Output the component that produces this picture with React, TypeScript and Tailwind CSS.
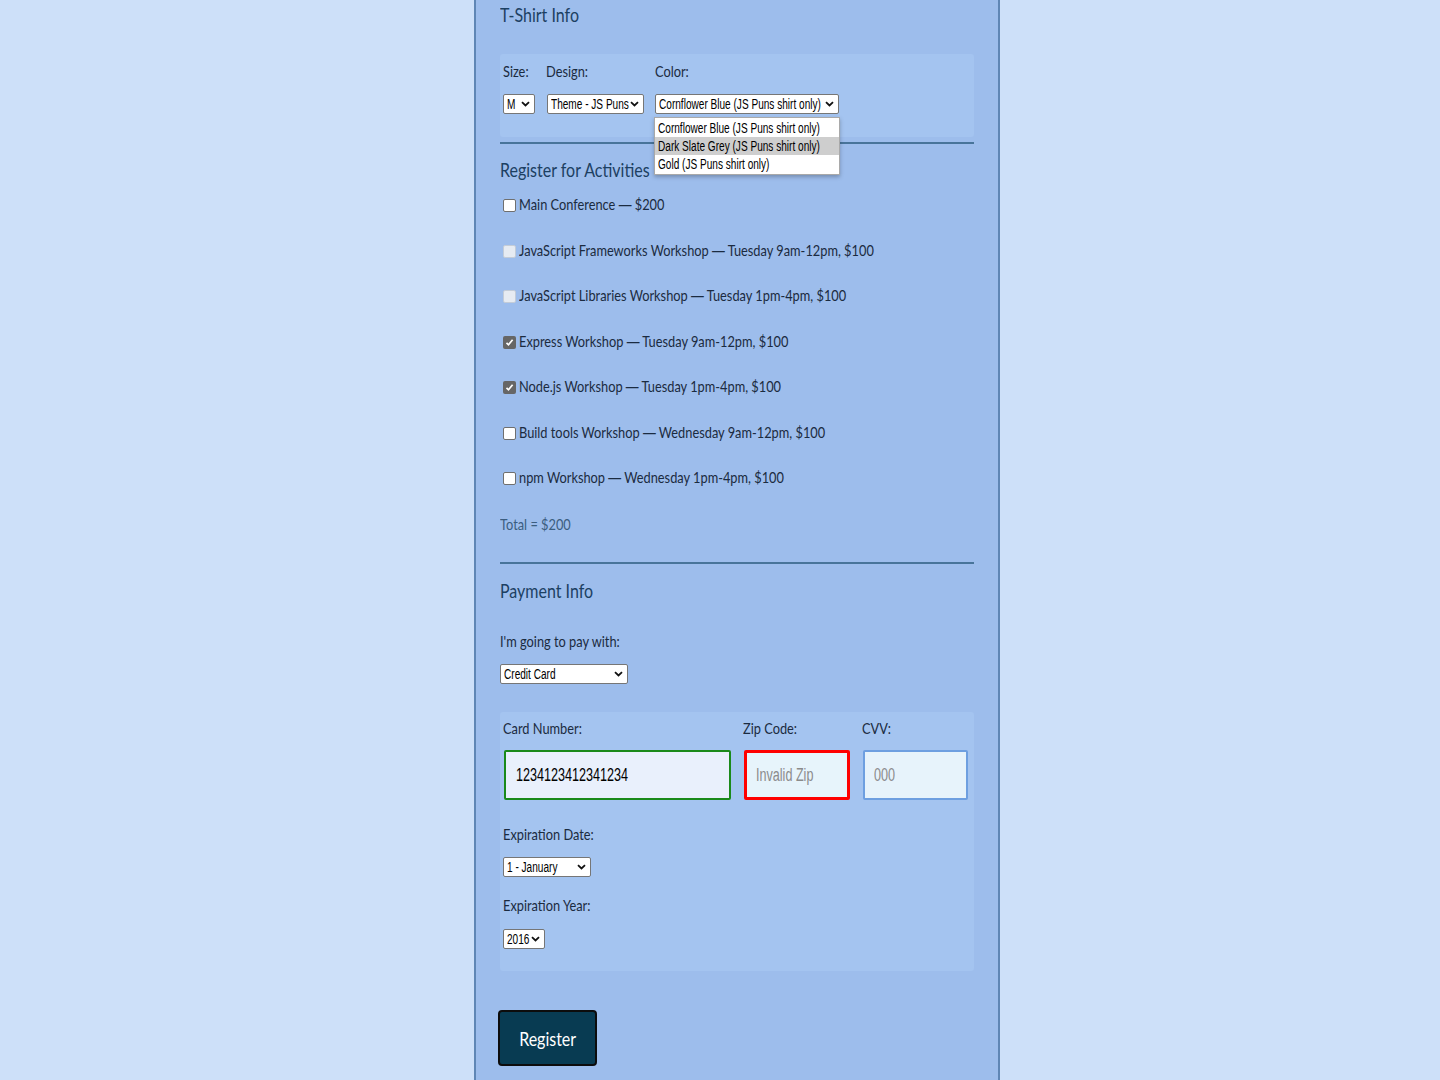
import type { ReactNode } from "react";

// Text in the reference is drawn narrow; squeeze it with a horizontal scale.
function T({ children, className = "" }: { children: ReactNode; className?: string }) {
  return (
    <span className={"inline-block origin-left scale-x-[0.8] whitespace-nowrap " + className}>{children}</span>
  );
}

function Chevron() {
  return (
    <svg width="9" height="6" viewBox="0 0 9 6" className="shrink-0">
      <path d="M1 1.2l3.5 3.3L8 1.2" fill="none" stroke="#111" strokeWidth="1.8" />
    </svg>
  );
}

function FakeSelect({ value, className = "" }: { value: string; className?: string }) {
  return (
    <div
      className={
        "flex h-[20px] items-center rounded-[2px] border border-[#767676] bg-white pl-[3px] pr-[4px] leading-[16px] " +
        className
      }
    >
      <div className="flex min-w-0 flex-1 items-center">
        <span className="inline-block origin-left scale-x-[0.72] whitespace-nowrap font-['Liberation_Sans',Arial,sans-serif] text-[14px] leading-[16px] text-black">
          {value}
        </span>
      </div>
      <Chevron />
    </div>
  );
}

function Box({ state }: { state: "off" | "on" | "disabled" }) {
  if (state === "on")
    return (
      <span className="flex h-[13px] w-[13px] shrink-0 items-center justify-center rounded-[2px] bg-[#666]">
        <svg width="9" height="9" viewBox="0 0 9 9">
          <path d="M1.5 4.8l2 2L7.6 1.8" fill="none" stroke="#fff" strokeWidth="1.7" />
        </svg>
      </span>
    );
  if (state === "disabled")
    return <span className="h-[13px] w-[13px] shrink-0 rounded-[2px] border border-[#c3ccd8] bg-[#e6ebf2]" />;
  return <span className="h-[13px] w-[13px] shrink-0 rounded-[2px] border border-[#6f6f6f] bg-white" />;
}

const activities: { name: string; rest: string; state: "off" | "on" | "disabled" }[] = [
  { name: "Main Conference", rest: "$200", state: "off" },
  { name: "JavaScript Frameworks Workshop", rest: "Tuesday 9am-12pm, $100", state: "disabled" },
  { name: "JavaScript Libraries Workshop", rest: "Tuesday 1pm-4pm, $100", state: "disabled" },
  { name: "Express Workshop", rest: "Tuesday 9am-12pm, $100", state: "on" },
  { name: "Node.js Workshop", rest: "Tuesday 1pm-4pm, $100", state: "on" },
  { name: "Build tools Workshop", rest: "Wednesday 9am-12pm, $100", state: "off" },
  { name: "npm Workshop", rest: "Wednesday 1pm-4pm, $100", state: "off" },
];

const colors = [
  "Cornflower Blue (JS Puns shirt only)",
  "Dark Slate Grey (JS Puns shirt only)",
  "Gold (JS Puns shirt only)",
];

export default function App() {
  return (
    <div className="flex min-h-screen justify-center bg-[#cde0f9] font-['Lato','Noto_Sans',sans-serif] text-[16px] text-[#1b2b40]">
      <div className="ml-[34px] w-[526px] min-h-[1080px] border-x-2 border-[#5f86b5] bg-[#9dbdec] px-[24px]">
        <h2 className="h-[28px] text-[20px] leading-[28px] text-[#1c4062]">
          <T>T-Shirt Info</T>
        </h2>

        {/* shirt */}
        <div className="mt-[26px] h-[83px] rounded-[3px] bg-[#a4c4f0] px-[3px] pt-[7px]">
          <div className="flex">
            <div className="w-[43px]">
              <div className="h-[20px] leading-[20px]"><T>Size:</T></div>
              <FakeSelect value="M" className="mt-[13px] w-[32px]" />
            </div>
            <div className="w-[109px]">
              <div className="h-[20px] leading-[20px]"><T>Design:</T></div>
              <FakeSelect value="Theme - JS Puns" className="mt-[13px] ml-[1px] w-[97px]" />
            </div>
            <div className="relative">
              <div className="h-[20px] leading-[20px]"><T>Color:</T></div>
              <FakeSelect value={colors[0]} className="mt-[13px] w-[184px]" />
              <ul className="absolute left-[-1px] top-[56px] z-10 w-[186px] border border-[#a9a9a9] bg-white py-[1px] shadow-[0_2px_4px_rgba(0,0,0,0.25)]">
                {colors.map((c, i) => (
                  <li
                    key={c}
                    className={"flex h-[18px] items-center pl-[3px] leading-[16px] " + (i === 1 ? "bg-[#cecece]" : "")}
                  >
                    <span className="inline-block origin-left scale-x-[0.72] whitespace-nowrap font-['Liberation_Sans',Arial,sans-serif] text-[14px] leading-[16px] text-black">
                      {c}
                    </span>
                  </li>
                ))}
              </ul>
            </div>
          </div>
        </div>

        <div className="mt-[5px] h-[2px] bg-[#48749a]" />

        <h2 className="mt-[12px] h-[27px] text-[20px] leading-[27px] text-[#1c4062]">
          <T>Register for Activities</T>
        </h2>
        {activities.map((a) => (
          <label key={a.name} className="flex h-[45.5px] items-center pl-[3px] leading-[20px]">
            <Box state={a.state} />
            <span className="ml-[3px] -mt-[2px]">
              <T>
                {a.name} <span className="font-['Liberation_Sans',Arial,sans-serif]">—</span> {a.rest}
              </T>
            </span>
          </label>
        ))}
        <div className="flex h-[45.5px] items-center leading-[20px] text-[#3b5d80]">
          <span className="-mt-[1px]"><T>Total = $200</T></span>
        </div>

        <div className="mt-[15px] h-[2px] bg-[#48749a]" />

        <h2 className="mt-[12px] h-[28px] text-[20px] leading-[28px] text-[#1c4062]">
          <T>Payment Info</T>
        </h2>
        <div className="mt-[27px] h-[20px] leading-[20px]"><T>I'm going to pay with:</T></div>
        <FakeSelect value="Credit Card" className="mt-[13px] w-[128px]" />

        {/* card */}
        <div className="mt-[28px] rounded-[3px] bg-[#a4c4f0] px-[3px] pt-[6px] pb-[22px]">
          <div className="flex h-[20px] leading-[20px]">
            <div className="w-[240px]"><T>Card Number:</T></div>
            <div className="w-[119px]"><T>Zip Code:</T></div>
            <div><T>CVV:</T></div>
          </div>
          <div className="mt-[12px] flex h-[50px] pl-[1px] leading-[20px]">
            <div className="flex w-[227px] items-center rounded-[2px] border-2 border-[#1a8a1a] bg-[#e9f0fc] pl-[10px]">
              <span className="inline-block origin-left scale-x-[0.7] whitespace-nowrap font-['Liberation_Sans',Arial,sans-serif] text-[18px] leading-[20px] text-black">
                1234123412341234
              </span>
            </div>
            <div className="ml-[13px] flex w-[106px] items-center rounded-[2px] border-[3px] border-[#ff0000] bg-[#e7f4fb] pl-[9px]">
              <span className="inline-block origin-left scale-x-[0.7] whitespace-nowrap font-['Liberation_Sans',Arial,sans-serif] text-[18px] leading-[20px] text-[#8b8b8b]">
                Invalid Zip
              </span>
            </div>
            <div className="ml-[13px] flex w-[105px] items-center rounded-[2px] border-2 border-[#6e9fe0] bg-[#e7f3fb] pl-[9px]">
              <span className="inline-block origin-left scale-x-[0.7] whitespace-nowrap font-['Liberation_Sans',Arial,sans-serif] text-[18px] leading-[20px] text-[#8b8b8b]">
                000
              </span>
            </div>
          </div>
          <div className="mt-[24px] h-[20px] leading-[20px]"><T>Expiration Date:</T></div>
          <FakeSelect value="1 - January" className="mt-[13px] w-[88px]" />
          <div className="mt-[18px] h-[20px] leading-[20px]"><T>Expiration Year:</T></div>
          <FakeSelect value="2016" className="mt-[14px] w-[42px]" />
        </div>

        <button className="mt-[39px] ml-[-2px] h-[56px] w-[99px] rounded-[4px] border-2 border-[#0c0c0c] bg-[#083b52] text-[20px] leading-[24px] text-white">
          <span className="-mt-[2px] inline-block scale-x-[0.8] whitespace-nowrap">Register</span>
        </button>
      </div>
    </div>
  );
}
